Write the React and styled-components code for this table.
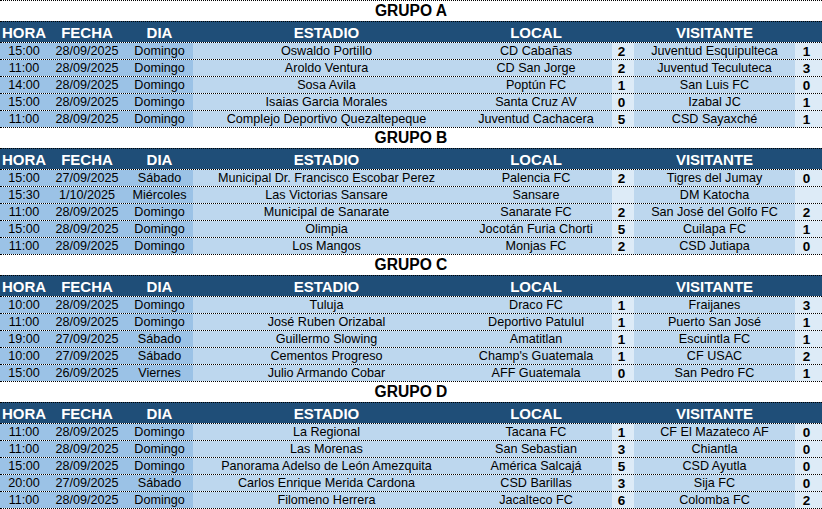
import React from 'react';
import styled, { createGlobalStyle } from 'styled-components';

const groups = [
  {
    name: 'GRUPO A',
    rows: [
      ['15:00', '28/09/2025', 'Domingo', 'Oswaldo Portillo', 'CD Cabañas', '2', 'Juventud Esquipulteca', '1'],
      ['11:00', '28/09/2025', 'Domingo', 'Aroldo Ventura', 'CD San Jorge', '2', 'Juventud Teculuteca', '3'],
      ['14:00', '28/09/2025', 'Domingo', 'Sosa Avila', 'Poptún FC', '1', 'San Luis FC', '0'],
      ['15:00', '28/09/2025', 'Domingo', 'Isaias Garcia Morales', 'Santa Cruz AV', '0', 'Izabal JC', '1'],
      ['11:00', '28/09/2025', 'Domingo', 'Complejo Deportivo Quezaltepeque', 'Juventud Cachacera', '5', 'CSD Sayaxché', '1'],
    ],
  },
  {
    name: 'GRUPO B',
    rows: [
      ['15:00', '27/09/2025', 'Sábado', 'Municipal Dr. Francisco Escobar Perez', 'Palencia FC', '2', 'Tigres del Jumay', '0'],
      ['15:30', '1/10/2025', 'Miércoles', 'Las Victorias Sansare', 'Sansare', '', 'DM Katocha', ''],
      ['11:00', '28/09/2025', 'Domingo', 'Municipal de Sanarate', 'Sanarate FC', '2', 'San José del Golfo FC', '2'],
      ['15:00', '28/09/2025', 'Domingo', 'Olimpia', 'Jocotán Furia Chorti', '5', 'Cuilapa FC', '1'],
      ['11:00', '28/09/2025', 'Domingo', 'Los Mangos', 'Monjas FC', '2', 'CSD Jutiapa', '0'],
    ],
  },
  {
    name: 'GRUPO C',
    rows: [
      ['10:00', '28/09/2025', 'Domingo', 'Tuluja', 'Draco FC', '1', 'Fraijanes', '3'],
      ['11:00', '28/09/2025', 'Domingo', 'José Ruben Orizabal', 'Deportivo Patulul', '1', 'Puerto San José', '1'],
      ['19:00', '27/09/2025', 'Sábado', 'Guillermo Slowing', 'Amatitlan', '1', 'Escuintla FC', '1'],
      ['10:00', '27/09/2025', 'Sábado', 'Cementos Progreso', "Champ's Guatemala", '1', 'CF USAC', '2'],
      ['15:00', '26/09/2025', 'Viernes', 'Julio Armando Cobar', 'AFF Guatemala', '0', 'San Pedro FC', '1'],
    ],
  },
  {
    name: 'GRUPO D',
    rows: [
      ['11:00', '28/09/2025', 'Domingo', 'La Regional', 'Tacana FC', '1', 'CF El Mazateco AF', '0'],
      ['11:00', '28/09/2025', 'Domingo', 'Las Morenas', 'San Sebastian', '3', 'Chiantla', '0'],
      ['15:00', '28/09/2025', 'Domingo', 'Panorama Adelso de León Amezquita', 'América Salcajá', '5', 'CSD Ayutla', '0'],
      ['20:00', '27/09/2025', 'Sábado', 'Carlos Enrique Merida Cardona', 'CSD Barillas', '3', 'Sija FC', '0'],
      ['11:00', '28/09/2025', 'Domingo', 'Filomeno Herrera', 'Jacalteco FC', '6', 'Colomba FC', '2'],
    ],
  },
];

const headers = ['HORA', 'FECHA', 'DIA', 'ESTADIO', 'LOCAL', '', 'VISITANTE', ''];
// tono de cada columna: hora/fecha/dia más oscuro, marcadores más claros
const tones = ['dark', 'dark', 'dark', 'mid', 'mid', 'light', 'mid', 'light'];

const toneColors = {
  dark: '#9bc2e6',
  mid: '#bdd7ee',
  light: '#ddebf7',
};

const GlobalStyle = createGlobalStyle`
  body {
    margin: 0;
    background: #ffffff;
    font-family: 'Liberation Sans', Arial, sans-serif;
  }
`;

const Sheet = styled.div`
  width: 822px;
  display: flex;
  flex-direction: column;
  border-bottom: 1px dotted #000;
`;

const GroupBlock = styled.section`
  display: flex;
  flex-direction: column;
`;

const TitleRow = styled.div`
  height: 20px;
  border-top: 1px dotted #000;
  display: flex;
  align-items: center;
  justify-content: center;
  font-size: 15.6px;
  font-weight: 700;
  color: #000;
`;

const Row = styled.div`
  display: grid;
  grid-template-columns: 48px 78px 67px 267px 152px 22px 161px 27px;
  border-top: 1px dotted #000;
`;

const HeaderRow = styled(Row)`
  height: 20px;
  background: #1f4e78;
`;

const HeaderCell = styled.div`
  display: flex;
  align-items: center;
  justify-content: center;
  color: #ffffff;
  font-size: 15px;
  font-weight: 700;
  white-space: nowrap;
`;

const DataRow = styled(Row)`
  height: 16px;
`;

const Cell = styled.div`
  display: flex;
  align-items: center;
  justify-content: center;
  background: ${(p) => toneColors[p.$tone]};
  color: #000;
  font-size: 12.6px;
  white-space: nowrap;
`;

const ScoreCell = styled(Cell)`
  font-weight: 700;
  font-size: 13.5px;
  padding-right: ${(p) => (p.$last ? '4px' : '3px')};
`;

const GroupTable = ({ group }) => (
  <GroupBlock>
    <TitleRow>{group.name}</TitleRow>
    <HeaderRow>
      {headers.map((h, i) => (
        <HeaderCell key={i}>{h}</HeaderCell>
      ))}
    </HeaderRow>
    {group.rows.map((row, r) => (
      <DataRow key={r}>
        {row.map((value, i) =>
          i === 5 || i === 7 ? (
            <ScoreCell key={i} $tone={tones[i]} $last={i === 7}>
              {value}
            </ScoreCell>
          ) : (
            <Cell key={i} $tone={tones[i]}>
              {value}
            </Cell>
          )
        )}
      </DataRow>
    ))}
  </GroupBlock>
);

const App = () => (
  <>
    <GlobalStyle />
    <Sheet>
      {groups.map((g) => (
        <GroupTable key={g.name} group={g} />
      ))}
    </Sheet>
  </>
);

export default App;
